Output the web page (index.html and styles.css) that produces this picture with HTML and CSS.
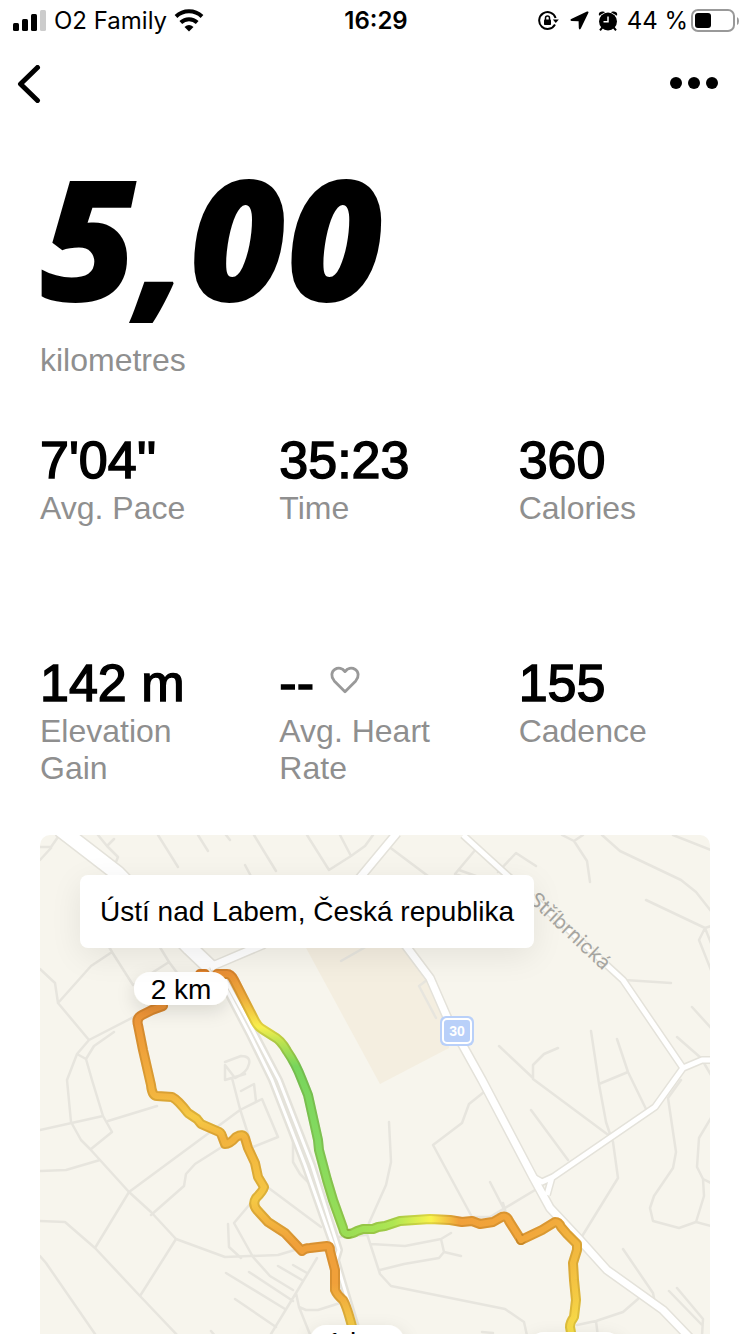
FILE: index.html
```html
<!DOCTYPE html>
<html lang="en">
<head>
<meta charset="utf-8">
<meta name="viewport" content="width=device-width, initial-scale=1">
<title>Run summary</title>
<link rel="stylesheet" href="styles.css">
</head>
<body>
<div class="screen">
  <div class="status">
    <div class="status-side">
      <svg class="signal" width="34" height="22" viewBox="0 0 34 22" aria-hidden="true">
        <rect x="0" y="13" width="6" height="8" rx="1.5"/><rect x="9" y="9" width="6" height="12" rx="1.5"/><rect x="18" y="4" width="6" height="17" rx="1.5"/><rect class="dim" x="27" y="0" width="6" height="21" rx="1.5"/>
      </svg>
      <span>O2 Family</span>
      <svg class="wifi" width="30" height="23" viewBox="0 0 30 23" aria-hidden="true">
        <path class="arc" d="M2 7.500A19 19 0 0 1 28 7.500M6.800 13.500A12 12 0 0 1 23.200 13.500"/><path d="M15 22.500L10.500 18Q15 14.200 19.500 18Z"/>
      </svg>
    </div>
    <div class="status-time">16:29</div>
    <div class="status-side status-end">
      <svg class="lock" width="21" height="22" viewBox="0 0 21 22" aria-hidden="true">
        <path class="thin" d="M17 14.500A8.400 8.400 0 1 1 17.600 8"/><path d="M14.800 9.500h6L17.800 13Z"/><rect x="6" y="9.500" width="7" height="5.500" rx=".8"/><path class="shackle" d="M7.500 10V8a2 2 0 0 1 4 0v2"/>
      </svg>
      <svg width="19" height="19" viewBox="0 0 19 19" aria-hidden="true"><path d="M17 .6Q19 0 18.300 2L10.800 17.500Q9.300 19.500 8.800 17L8.600 10.300L1.500 10Q-.5 9.300 1.200 8Z"/></svg>
      <svg class="alarm" width="20" height="20" viewBox="0 0 20 20" aria-hidden="true">
        <circle cx="10" cy="10.500" r="9"/><path d="M1 4.700Q0 1 4 .5Q6.300.2 7 1.300ZM19 4.700Q20 1 16 .5Q13.700.2 13 1.300Z"/><path class="thin" d="M4.300 16.500L2 19.300M15.700 16.500L18 19.300"/><path class="hands" d="M10 5.500v5.300H5.500"/>
      </svg>
      <span>44 %</span>
      <svg class="battery" width="48" height="24" viewBox="0 0 48 24" aria-hidden="true">
        <rect class="shell" x="1" y="1" width="42" height="21" rx="6"/><rect x="4" y="4" width="16" height="15" rx="3"/><path class="cap" d="M46 8v8q2-1 2-4t-2-4Z"/>
      </svg>
    </div>
  </div>

  <header class="nav">
    <button class="nav-button" type="button" aria-label="Back">
      <svg width="24" height="38" viewBox="0 0 24 38"><path class="chevron" d="M20.500 2.500L3.500 19L20.500 35.500"/></svg>
    </button>
    <button class="nav-button" type="button" aria-label="More options">
      <svg width="50" height="14" viewBox="0 0 50 14"><circle cx="7" cy="6" r="6"/><circle cx="25" cy="6" r="6"/><circle cx="43" cy="6" r="6"/></svg>
    </button>
  </header>

  <main class="content">
    <section class="hero">
      <h1 class="distance">5,00</h1>
      <p class="label">kilometres</p>
    </section>

    <dl class="stats">
      <div class="stat"><dd class="value">7'04''</dd><dt class="label">Avg. Pace</dt></div>
      <div class="stat"><dd class="value">35:23</dd><dt class="label">Time</dt></div>
      <div class="stat"><dd class="value">360</dd><dt class="label">Calories</dt></div>
      <div class="stat"><dd class="value">142 m</dd><dt class="label">Elevation Gain</dt></div>
      <div class="stat"><dd class="value value-icon">--
        <svg class="heart-icon" width="30" height="28" viewBox="0 0 32 30" aria-hidden="true"><path class="heart" d="M16 27.500L4.500 16C.5 11.500 1.500 6 5 3.700C9 1.200 13.500 2.500 16 6C18.500 2.500 23 1.200 27 3.700C30.500 6 31.500 11.500 27.500 16Z"/></svg></dd><dt class="label">Avg. Heart Rate</dt></div>
      <div class="stat"><dd class="value">155</dd><dt class="label">Cadence</dt></div>
    </dl>

    <section class="map" aria-label="Route map">
      <svg class="map-canvas" viewBox="40 835 670 499" preserveAspectRatio="xMidYMin slice">
        <defs>
          <linearGradient id="west" gradientUnits="userSpaceOnUse" x1="0" y1="972" x2="0" y2="1334">
            <stop offset="0" stop-color="#e8862e"/><stop offset=".12" stop-color="#ec9437"/><stop offset=".34" stop-color="#f3b53f"/><stop offset=".4" stop-color="#f6ca44"/><stop offset=".46" stop-color="#f2b33e"/><stop offset=".63" stop-color="#f5c844"/><stop offset=".75" stop-color="#f0a03a"/><stop offset=".86" stop-color="#f0a03a"/><stop offset="1" stop-color="#f4d348"/>
          </linearGradient>
          <linearGradient id="north" gradientUnits="userSpaceOnUse" x1="0" y1="972" x2="0" y2="1234">
            <stop offset="0" stop-color="#eb9035"/><stop offset=".1" stop-color="#efae3c"/><stop offset=".21" stop-color="#f8ef4d"/><stop offset=".27" stop-color="#b9e250"/><stop offset=".36" stop-color="#78d55c"/><stop offset=".65" stop-color="#84da60"/><stop offset="1" stop-color="#9ade55"/>
          </linearGradient>
          <linearGradient id="middle" gradientUnits="userSpaceOnUse" x1="348" y1="0" x2="521" y2="0">
            <stop offset="0" stop-color="#9ade55"/><stop offset=".26" stop-color="#aee653"/><stop offset=".48" stop-color="#f9f34d"/><stop offset=".64" stop-color="#f0a03a"/><stop offset="1" stop-color="#f2a73b"/>
          </linearGradient>
          <linearGradient id="east" gradientUnits="userSpaceOnUse" x1="521" y1="1240" x2="600" y2="1325">
            <stop offset="0" stop-color="#f2a73b"/><stop offset=".4" stop-color="#f2b93f"/><stop offset=".7" stop-color="#f5cc44"/><stop offset="1" stop-color="#f7e94c"/>
          </linearGradient>
          <filter id="lift" x="-50%" y="-80%" width="200%" height="300%"><feDropShadow dx="0" dy="6" stdDeviation="9" flood-color="#000" flood-opacity=".12"/></filter>
          <path id="route-west" d="M200 974L205 974M163 1006L152 1010L142 1015Q136 1018 138 1025L143 1050L151 1085Q152 1096 157 1096L172 1097Q178 1100 188 1113L197 1119L201 1124L217 1131Q221 1132 222 1136L225 1144Q230 1144 236 1137Q243 1133 245 1138L248 1148L255 1163L258 1177L264 1187Q263 1191 256 1198Q252 1204 257 1210L268 1222L285 1233L302 1251Q305 1248 310 1248L327 1246Q330 1246 330 1251L335 1270L335 1290Q337 1295 343 1300Q347 1306 354 1334"/>
          <path id="route-north" d="M217 974L227 974Q231 974 234 980L253 1017Q257 1026 262 1029L273 1036Q281 1040 287 1051Q296 1064 302 1080L308 1095L318 1140L319 1150L327 1180L333 1200L343 1228Q344 1234 348 1234"/>
          <path id="route-middle" d="M348 1234Q352 1234 357 1231L363 1229L373 1229L378 1227L385 1226L400 1221L430 1219L450 1220L462 1222L472 1221L480 1224L493 1222L500 1218Q506 1214 509 1221L521 1240"/>
          <path id="route-east" d="M521 1240L542 1230L555 1222Q559 1222 561 1227L567 1234L577 1244V1250L573 1263L574 1280L576 1300L574 1317Q570 1322 570 1327L572 1338"/>
        </defs>
        <rect class="land" x="-400" y="835" width="1600" height="900"/>
        <path class="field" d="M299 935H400L430 978L447 1017L449 1048L380 1084Z"/>
        <g class="lane">
          <path d="M40 847H51L58 837M40 860L51 848M98 835L107 846L118 857L116 862M107 846L114 839M158 835L178 867M198 835L208 851M226 835L230 840M254 835L276 871M245 865L253 880M307 835L329 870L351 856L365 846L373 835M340 835L351 856M388 846L432 879M476 849L455 874L475 881M459 870L476 876M498 872L516 853L536 866M562 835L574 841L583 835M574 841L587 861L590 882M602 835L620 851L681 880L696 892L711 911M673 835L711 850M646 900L705 928L711 926M705 928L711 943M705 928L699 940L711 970M625 980L671 983M692 1007L711 1028M677 1037L701 1058L711 1075"/>
          <path d="M40 969L55 983L58 1003L91 966L112 952L102 935M58 1003L89 1040L77 1054L67 1080L71 1122L81 1140L90 1149L129 1192L151 1212L176 1239L225 1257L278 1255L298 1249M89 1040L157 1005M77 1054L86 1059L94 1046L114 1032M86 1059L92 1080L103 1116L112 1132L91 1149M112 952L133 985L169 962L158 944M169 962L178 974M40 1130L103 1116M108 1121L157 1106M40 1171L66 1170L100 1160"/>
          <path d="M341 961L376 941M427 980L419 986L436 1018M499 1046L533 1078V1065L544 1054L558 1048M591 1031L599 1084L606 1122L611 1137L613 1142L618 1178L581 1238M617 1039L628 1072L646 1109M599 1084L628 1072M533 1079L611 1137M531 1110L568 1160M681 1080L668 1098L676 1152L673 1168L654 1196L650 1208L653 1221L679 1228L696 1222L711 1226M711 1118L699 1138L697 1167L703 1179L711 1183M703 1179L704 1196L696 1222"/>
          <path d="M225 1062L241 1056Q251 1056 249 1064Q247 1073 235 1078L225 1065V1080L245 1074M232 1078L240 1109L249 1137M241 1091L254 1084L256 1101M240 1110L262 1099L278 1137L253 1147M240 1110L129 1192L95 1248M151 1215L184 1186L186 1174L195 1164L225 1145M266 1186L321 1227M250 1204L234 1223L253 1257L270 1276L293 1290M228 1224L229 1247L241 1258M176 1239L140 1296M40 1221L65 1222L95 1248L140 1296L179 1337M40 1256L46 1263L95 1334M226 1273L285 1309M249 1272L293 1301M235 1299L276 1327M278 1266L302 1280M293 1265L307 1273M317 1258L296 1293L271 1334M296 1293L299 1307L311 1337M299 1307L306 1310H318L340 1303M211 1331L216 1337M293 1127V1162L300 1174L309 1183"/>
          <path d="M389 1122L391 1162L386 1185L369 1223L367 1234L380 1274L391 1286L505 1309L524 1322L528 1340M371 1244L405 1246L441 1239L451 1233M441 1239L444 1252L439 1258L404 1264L380 1270M444 1252L461 1256M339 1237L366 1235M484 1092L469 1104L462 1123L433 1145L472 1217H490L540 1187M490 1182L506 1213M577 1325L596 1321L623 1312L638 1299M596 1321L598 1337M623 1249L653 1293L655 1303M669 1291L702 1325M677 1288L703 1319L702 1336M482 1332L493 1333M503 1203L506 1213"/>
        </g>
        <g class="road-edge">
          <path class="w16" d="M60 829L117 873L190 948L210 967"/><path class="w10" d="M210 967L222 962L262 945L358 880L397 833"/><path class="w6" d="M213 967L227 991L250 1035L272 1080L305 1165L333 1245M222 974L245 1015L279 1080L312 1165L339 1250L336 1260L358 1334M463 835L507 875L560 922L623 980L683 1068L702 1060H713M683 1068L655 1107L553 1177L542 1182L533 1177M552 1177L547 1195"/><path class="w8" d="M400 938L430 978L447 1017L482 1080L533 1177L550 1208L580 1240L607 1270L663 1310L690 1338"/>
        </g>
        <g class="road">
          <path class="w16" d="M60 829L117 873L190 948L210 967"/><path class="w10" d="M210 967L222 962L262 945L358 880L397 833"/><path class="w4" d="M213 967L227 991L250 1035L272 1080L305 1165L333 1245M222 974L245 1015L279 1080L312 1165L339 1250L336 1260L358 1334"/><path class="w6" d="M463 835L507 875L560 922L623 980L683 1068L702 1060H713M683 1068L655 1107L553 1177L542 1182L533 1177M552 1177L547 1195"/><path class="w8" d="M400 938L430 978L447 1017L482 1080L533 1177L550 1208L580 1240L607 1270L663 1310L690 1338"/>
        </g>
        <text class="street" transform="translate(528 901) rotate(43)">Stříbrnická</text>
        <rect class="shield" x="440" y="1016" width="34" height="30" rx="6"/><rect class="shield-line" x="443" y="1019" width="28" height="24" rx="4"/><text class="shield-text" x="457" y="1036">30</text>
        <g class="route">
          <use href="#route-west" stroke="url(#west)"/><use href="#route-north" stroke="url(#north)"/><use href="#route-middle" stroke="url(#middle)"/><use href="#route-east" stroke="url(#east)"/>
        </g>
        <g class="route route-shade"><use href="#route-west"/><use href="#route-north"/><use href="#route-middle"/><use href="#route-east"/></g>
        <g class="route route-core">
          <use href="#route-west" stroke="url(#west)"/><use href="#route-north" stroke="url(#north)"/><use href="#route-middle" stroke="url(#middle)"/><use href="#route-east" stroke="url(#east)"/>
        </g>
        <g class="pin"><rect x="134" y="972" width="94" height="33" rx="16"/><rect x="310" y="1325" width="94" height="33" rx="16"/><rect x="528" y="1332" width="94" height="33" rx="16"/></g>
        <text class="pin-text" x="181" y="999">2 km</text>
        <text class="pin-text" x="357" y="1352">1 km</text>
      </svg>
      <p class="place">Ústí nad Labem, Česká republika</p>
    </section>
  </main>
</div>
</body>
</html>
```

FILE: styles.css
```css
* { box-sizing: border-box; }

body {
  margin: 0;
  background: #fff;
  color: #000;
  font-family: "Liberation Sans", Arial, sans-serif;
}

h1, p, dl, dd { margin: 0; }

.screen {
  display: flex;
  flex-direction: column;
  height: 100vh;
  min-height: 1200px;
  overflow: hidden;
}

/* Status bar */
.status {
  display: grid;
  grid-template-columns: 1fr auto 1fr;
  align-items: center;
  height: 40px;
  padding: 1px 11px 0 13px;
  font: 24px/32px Inter, sans-serif;
}
.status-side { display: flex; align-items: center; gap: 7px; white-space: nowrap; }
.status-end { justify-content: flex-end; gap: 9px; }
.status-time { font-weight: 600; }
.lock { margin-right: 2px; }
.dim { fill: #ccc; }
.arc { fill: none; stroke: #000; stroke-width: 4; }
.thin { fill: none; stroke: #000; stroke-width: 2; }
.shackle { fill: none; stroke: #000; stroke-width: 1.500; }
.hands { fill: none; stroke: #fff; stroke-width: 1.500; }
.shell { fill: none; stroke: #999; stroke-width: 2; }
.cap { fill: #999; }
.battery { margin-left: -6px; }

/* Navigation */
.nav {
  display: flex;
  justify-content: space-between;
  align-items: center;
  height: 88px;
  padding: 0 31px 0 17px;
}
.nav-button {
  display: flex;
  padding: 0;
  border: 0;
  background: none;
}
.chevron { fill: none; stroke: #000; stroke-width: 5; stroke-linecap: round; stroke-linejoin: round; }

/* Figures */
.content {
  display: flex;
  flex: 1;
  flex-direction: column;
  min-height: 0;
  padding: 0 40px;
}
.hero { padding-top: 24px; }
.distance {
  font: italic 800 168px/168px "Open Sans", sans-serif;
}
.hero .label { margin-top: 22px; }
.label {
  color: #8f8f8f;
  font-size: 32px;
  line-height: 37px;
}
.stats {
  display: grid;
  grid-template-columns: repeat(3, 1fr);
  gap: 126px 48px;
  margin: 51px 0 48px;
}
.stat { display: flex; flex-direction: column; }
.value {
  font-size: 52px;
  line-height: 60px;
  -webkit-text-stroke: 1.500px #000;
}
.value-icon { display: flex; align-items: center; gap: 16px; }
.heart-icon { margin-bottom: 6px; }
.heart { fill: none; stroke: #999; stroke-width: 3; stroke-linejoin: round; }

/* Map */
.map {
  position: relative;
  flex: 1;
  min-height: 0;
  padding: 40px;
  border-radius: 10px 10px 0 0;
  overflow: hidden;
}
.map-canvas { position: absolute; inset: 0; width: 100%; height: 100%; }
.place {
  position: relative;
  width: fit-content;
  padding: 20px;
  border-radius: 8px;
  background: #fff;
  box-shadow: 0 8px 32px rgba(0, 0, 0, .08);
  font-size: 28px;
  line-height: 33px;
}
.land { fill: #f7f5ed; }
.field { fill: #f4eee0; }
.lane { fill: none; stroke: #e7e5de; stroke-width: 2.500; stroke-linecap: round; stroke-linejoin: round; }
.road, .road-edge { fill: none; stroke-linejoin: round; }
.road { stroke: #fff; }
.road-edge { stroke: #e4e2da; }
.road .w16 { stroke-width: 14; }
.road .w10 { stroke-width: 7; }
.road .w8 { stroke-width: 7; }
.road .w6 { stroke-width: 5; }
.road .w4 { stroke-width: 3; }
.road-edge .w16 { stroke-width: 17; }
.road-edge .w10 { stroke-width: 10; }
.road-edge .w8 { stroke-width: 10; }
.road-edge .w6 { stroke-width: 8; }
.street { fill: #a6a5a1; stroke: #f7f5ed; stroke-width: 2; paint-order: stroke; font: 20px Inter, sans-serif; }
.shield { fill: #b9d0f9; }
.shield-line { fill: none; stroke: #fff; stroke-width: 2; }
.shield-text { fill: #fff; font: bold 14px "Liberation Sans", sans-serif; text-anchor: middle; }
.route { fill: none; stroke-width: 10; stroke-linecap: round; stroke-linejoin: round; }
.route-shade { stroke: #604000; stroke-opacity: .16; }
.route-core { stroke-width: 6; }
.pin { fill: #fff; filter: url(#lift); }
.pin-text { font: 28px "Liberation Sans", sans-serif; text-anchor: middle; }
```
